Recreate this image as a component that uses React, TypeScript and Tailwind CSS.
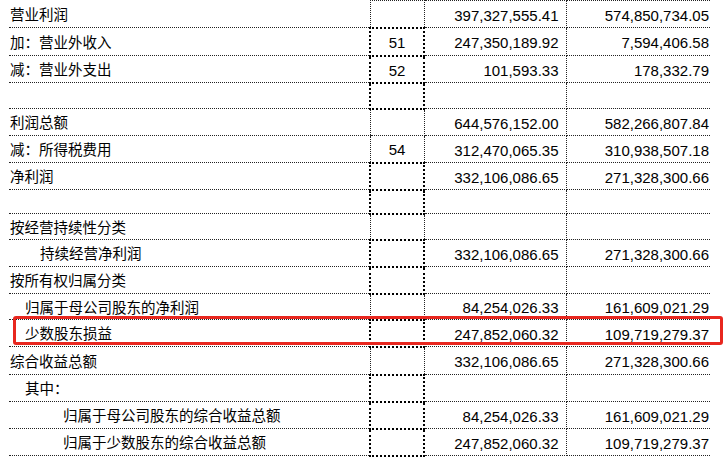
import React from "react";

type Row = {
  label: string;
  indent: number;
  note?: string;
  v1?: string;
  v2?: string;
  h: number;
  heavy?: boolean;
};

const rows: Row[] = [
  { label: "营业利润", indent: 1, v1: "397,327,555.41", v2: "574,850,734.05", h: 27 },
  { label: "加：营业外收入", indent: 1, note: "51", v1: "247,350,189.92", v2: "7,594,406.58", h: 28, heavy: true },
  { label: "减：营业外支出", indent: 1, note: "52", v1: "101,593.33", v2: "178,332.79", h: 27, heavy: true },
  { label: "", indent: 1, h: 26, heavy: true },
  { label: "利润总额", indent: 1, v1: "644,576,152.00", v2: "582,266,807.84", h: 27 },
  { label: "减：所得税费用", indent: 1, note: "54", v1: "312,470,065.35", v2: "310,938,507.18", h: 27 },
  { label: "净利润", indent: 1, v1: "332,106,086.65", v2: "271,328,300.66", h: 27, heavy: true },
  { label: "", indent: 1, h: 24, heavy: true },
  { label: "按经营持续性分类", indent: 1, h: 26 },
  { label: "持续经营净利润", indent: 31, v1: "332,106,086.65", v2: "271,328,300.66", h: 27, heavy: true },
  { label: "按所有权归属分类", indent: 1, h: 27, heavy: true },
  { label: "归属于母公司股东的净利润", indent: 16, v1: "84,254,026.33", v2: "161,609,021.29", h: 26 },
  { label: "少数股东损益", indent: 16, v1: "247,852,060.32", v2: "109,719,279.37", h: 27, heavy: true },
  { label: "综合收益总额", indent: 1, v1: "332,106,086.65", v2: "271,328,300.66", h: 28 },
  { label: "其中：", indent: 16, h: 27, heavy: true },
  { label: "归属于母公司股东的综合收益总额", indent: 54, v1: "84,254,026.33", v2: "161,609,021.29", h: 27, heavy: true },
  { label: "归属于少数股东的综合收益总额", indent: 54, v1: "247,852,060.32", v2: "109,719,279.37", h: 27, heavy: true },
];

const cjk = { fontFamily: '"Noto Sans CJK SC", "Noto Sans", sans-serif' };
const num = { fontFamily: '"Liberation Sans", Arial, sans-serif' };

export default function App() {
  return (
    <div className="relative w-[726px] h-[458px] bg-white overflow-hidden text-black">
      <table className="ml-[9px] border-collapse table-fixed w-[701px]">
        <colgroup>
          <col className="w-[361px]" />
          <col className="w-[54px]" />
          <col className="w-[142px]" />
          <col className="w-[144px]" />
        </colgroup>
        <tbody>
          {rows.map((r, i) => (
            <tr key={i} style={{ height: r.h }}>
              <td
                className={`p-0 border-y border-dotted border-[#222] align-middle text-[14.5px] leading-none whitespace-nowrap ${i === 0 ? "border-t-0" : ""}`}
                style={{ ...cjk, paddingLeft: r.indent, paddingTop: 1 }}
              >
                {r.label}
              </td>
              <td
                className={`p-0 text-center align-middle text-[15px] leading-none ${
                  r.heavy ? "border-2 border-dotted border-black" : "border border-dotted border-[#222]"
                }`}
                style={{ ...num, paddingTop: 2 }}
              >
                {r.note ?? ""}
              </td>
              <td
                className="p-0 pr-[7px] text-right align-middle text-[15px] leading-none border-y border-r border-dotted border-[#222]"
                style={{ ...num, paddingTop: 2 }}
              >
                {r.v1 ?? ""}
              </td>
              <td
                className="p-0 pr-[1px] text-right align-middle text-[15px] leading-none border-y border-dotted border-[#222]"
                style={{ ...num, paddingTop: 2 }}
              >
                {r.v2 ?? ""}
              </td>
            </tr>
          ))}
        </tbody>
      </table>
      <div className="absolute left-[13px] top-[316px] w-[710px] h-[29px] border-[3px] border-[#e8271f] rounded-[3px]" />
    </div>
  );
}
